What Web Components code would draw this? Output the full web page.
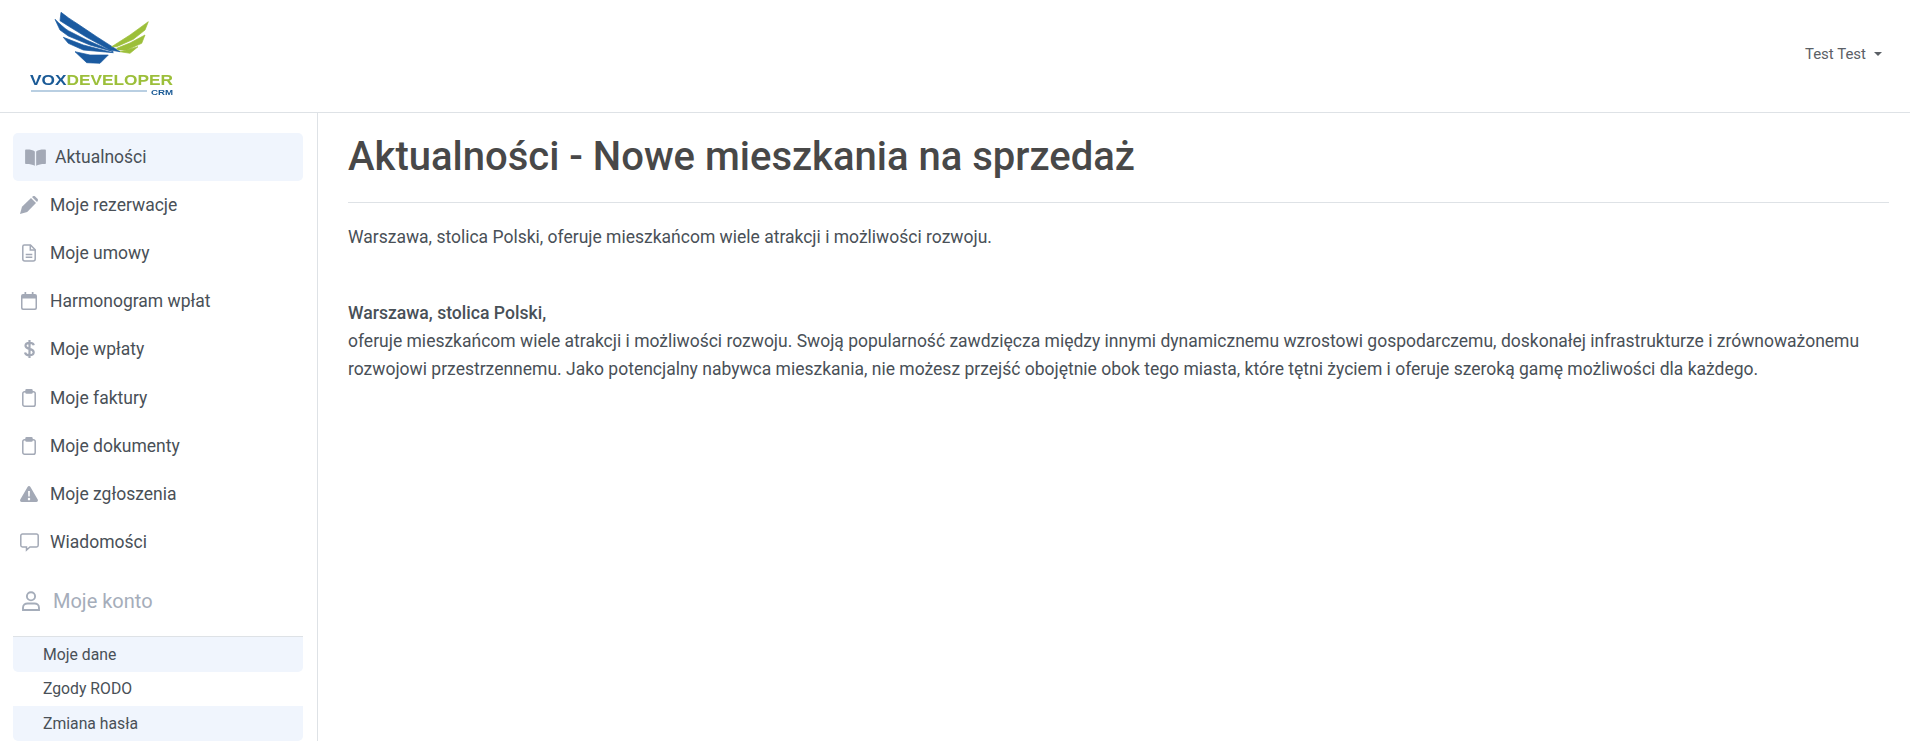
<!DOCTYPE html>
<html lang="pl">
<head>
<meta charset="utf-8">
<title>Aktualności</title>
<style>
    html, body {
        margin: 0;
        background: #fff;
        color: #495057;
        font-family: Roboto, "Liberation Sans", sans-serif;
    }
</style>
</head>
<body>
<crm-app></crm-app>
<script>
const icons = {
    book: `<svg viewBox="0 0 22 18" width="21" height="17"><path d="M10.300 2.600C8.200 1 4.600.4.800.6.300.7 0 1 0 1.500V15.200c0 .5.300.8.800.8 3.500-.1 7 .4 9.500 1.800z"/><path d="M11.700 2.600C13.800 1 17.400.4 21.200.6c.5.100.8.400.8.900V15.200c0 .5-.3.800-.8.800-3.500-.1-7 .4-9.500 1.800z"/></svg>`,
    pencil: `<svg viewBox="0 0 18 18" width="18" height="18"><path d="M0 18l2-7.200L11 2l5 5-8.800 9z"/><path d="M12 1l1-.7c.6-.4 1.300-.4 1.900 0l2.800 2.700c.4.600.4 1.300 0 1.900L17 6z"/></svg>`,
    file: `<svg viewBox="0 0 14 18" width="14" height="18" fill="none"><path d="M2.300 1h6.200l4.700 4.700V15a2 2 0 0 1-2 2H2.800a2 2 0 0 1-2-2V2.500A1.500 1.500 0 0 1 2.300 1z"/><path d="M8.300 1v5h4.900M3.700 10.500h6.600M3.700 13.300h6.600"/></svg>`,
    calendar: `<svg viewBox="0 0 16 18" width="16" height="18"><path fill-rule="evenodd" d="M3.500 0h1.700v2h5.600V0h1.700v2H14a2 2 0 0 1 2 2v12a2 2 0 0 1-2 2H2a2 2 0 0 1-2-2V4a2 2 0 0 1 2-2h1.500zM1.500 6.500V15.600c0 .5.400.9.900.9h11.200c.5 0 .9-.4.900-.9V6.500z"/></svg>`,
    dollar: `<svg viewBox="0 0 11 18" width="11" height="18" fill="none" class="thick"><path d="M9.800 5.200C9.400 3.600 7.700 2.900 5.600 2.900 3.300 2.900 1.500 3.900 1.500 5.800c0 1.800 1.700 2.500 4 3.100 2.400.6 4.200 1.300 4.200 3.300 0 1.900-1.900 3-4.200 3-2.300 0-4.100-.9-4.500-2.800M5.500 0v18"/></svg>`,
    clipboard: `<svg viewBox="0 0 14 18" width="14" height="18" fill="none"><path d="M4 2.700H2.600A1.800 1.800 0 0 0 .8 4.500V15.400a1.800 1.800 0 0 0 1.800 1.800h8.800a1.800 1.800 0 0 0 1.800-1.800V4.500a1.800 1.800 0 0 0-1.800-1.800H10"/><rect x="4" y=".8" width="6" height="3.200" rx=".6" class="solid"/></svg>`,
    warning: `<svg viewBox="0 0 20 17" width="18" height="16" preserveAspectRatio="none"><path fill-rule="evenodd" d="M8.400 1c.7-1.300 2.500-1.300 3.200 0l8.100 13.400c.7 1.200-.2 2.600-1.600 2.600H1.900C.5 17-.4 15.600.3 14.400zM9 5.200l.2 6h1.600l.2-6zM10 12.500a1.400 1.400 0 1 0 0 2.800 1.400 1.400 0 0 0 0-2.800z"/></svg>`,
    chat: `<svg viewBox="0 0 19 18" width="19" height="18" fill="none"><path d="M2.500 1h14a1.700 1.700 0 0 1 1.700 1.700v9.600a1.700 1.700 0 0 1-1.700 1.700H10l-3.500 3v-3h-4a1.700 1.700 0 0 1-1.700-1.700V2.700A1.700 1.700 0 0 1 2.500 1z"/></svg>`,
    person: `<svg viewBox="0 0 18 20" width="18" height="20" fill="none"><circle cx="9" cy="5.300" r="4.100"/><path d="M1 19v-2.300C1 14 3.200 12.500 5.500 12.500h7c2.300 0 4.500 1.500 4.500 4.200V19z"/></svg>`
}

class VoxLogo extends HTMLElement {
    constructor() {
        super()
        const shadowRoot = this.attachShadow({mode: 'open'})
        shadowRoot.innerHTML = `
            <style>
                :host {
                    display: block;
                    width: 150px;
                    height: 100px;
                }
                svg {
                    display: block;
                    filter: blur(.4px);
                }
                text {
                    font-family: "Liberation Sans", sans-serif;
                    font-weight: 700;
                }
                .wing {
                    stroke-width: .7;
                    stroke-linejoin: round;
                }
            </style>
            <svg viewBox="0 0 150 100" width="150" height="100">
                <g class="wing" fill="#1a5aa0" stroke="#1a5aa0">
                    <path d="M31 12.300C36 16 41 20 46.700 23.300L66.700 36.700 90 51.700 80 50 56.700 37.300 38.300 26 30 20.700z"/>
                    <path d="M25 19.300C30 24 34 28 38.300 30.700L56.700 40 83.300 51.700 60 45 38.300 36 30 30z"/>
                    <path d="M33.300 37.300L53.300 45 83.300 52.700 53.300 50 38.300 43.300z"/>
                    <path d="M45 51.700L60 55 78.300 55 70 63.300 56.700 62.700z"/>
                </g>
                <g class="wing" fill="#9cbf3a" stroke="#9cbf3a">
                    <path d="M81.700 46.700L100 35 118.300 21.700 115 30 103.300 39.300 86.700 46.700z"/>
                    <path d="M115 35L100 43 86.700 48.300 88 50 96.700 50 111.700 43.300z"/>
                    <path d="M108 46.700L90 51.700 100 53.300z"/>
                </g>
                <text x="0" y="85" font-size="15" textLength="143" lengthAdjust="spacingAndGlyphs"><tspan fill="#1a5a96">VOX</tspan><tspan fill="#9cbf3a">DEVELOPER</tspan></text>
                <rect x="1" y="90" width="116" height="2" fill="#b9cfe2"/>
                <text x="121" y="95" font-size="8" fill="#1a5a96" textLength="22" lengthAdjust="spacingAndGlyphs">CRM</text>
            </svg>
        `
    }
}

class AppHeader extends HTMLElement {
    constructor() {
        super()
        const shadowRoot = this.attachShadow({mode: 'open'})
        shadowRoot.innerHTML = `
            <style>
                :host {
                    display: flex;
                    align-items: flex-start;
                    justify-content: space-between;
                    height: 112px;
                    padding-left: 30px;
                    padding-right: 28px;
                    border-bottom: 1px solid #dee2e6;
                }
                .user {
                    display: flex;
                    align-items: center;
                    gap: 8px;
                    margin-top: 45px;
                    font-size: 15px;
                    line-height: 18px;
                    color: #5b6066;
                }
                .caret {
                    width: 0;
                    height: 0;
                    border-left: 4px solid transparent;
                    border-right: 4px solid transparent;
                    border-top: 4px solid #5b6066;
                }
            </style>
            <vox-logo></vox-logo>
            <div class="user"><span>Test Test</span><span class="caret"></span></div>
        `
    }
}

class NavItem extends HTMLElement {
    constructor() {
        super()
        const shadowRoot = this.attachShadow({mode: 'open'})
        const icon = this.getAttribute('icon')
        shadowRoot.innerHTML = `
            <style>
                :host {
                    display: flex;
                    align-items: center;
                    height: 48.1px;
                    font-size: 17.5px;
                    color: #495057;
                    border-radius: 5px;
                    padding-left: 7px;
                }
                :host([active]) {
                    background: #f0f5fd;
                    padding-left: 11px;
                }
                .ico {
                    display: flex;
                    align-items: center;
                    justify-content: center;
                    width: 18px;
                    margin-right: 12px;
                }
                :host([active]) .ico {
                    width: 22px;
                    margin-right: 9px;
                }
                svg {
                    fill: #a3a9b6;
                    overflow: visible;
                }
                svg[fill="none"] {
                    fill: none;
                    stroke: #a3a9b6;
                    stroke-width: 1.5;
                }
                svg.thick {
                    stroke-width: 2.2;
                }
                .solid {
                    fill: #a3a9b6;
                }
            </style>
            <span class="ico">${icons[icon]}</span>
            <slot></slot>
        `
    }
}

class SubItem extends HTMLElement {
    constructor() {
        super()
        const shadowRoot = this.attachShadow({mode: 'open'})
        shadowRoot.innerHTML = `
            <style>
                :host {
                    display: flex;
                    align-items: center;
                    height: 34.7px;
                    padding-left: 30px;
                    font-size: 15.75px;
                    color: #495057;
                    border-radius: 0 0 5px 5px;
                }
                :host([shaded]) {
                    background: #f0f5fd;
                }
            </style>
            <slot></slot>
        `
    }
}

class SideNav extends HTMLElement {
    constructor() {
        super()
        const shadowRoot = this.attachShadow({mode: 'open'})
        shadowRoot.innerHTML = `
            <style>
                :host {
                    display: block;
                    box-sizing: border-box;
                    flex: none;
                    width: 318px;
                    height: 628px;
                    padding: 20px 14px 0 13px;
                    border-right: 1px solid #dee2e6;
                }
                .account {
                    display: flex;
                    align-items: center;
                    gap: 13px;
                    height: 71px;
                    box-sizing: border-box;
                    padding-left: 9px;
                    font-size: 20px;
                    color: #a5adba;
                    border-bottom: 1px solid #dee2e6;
                }
                .account svg {
                    fill: none;
                    stroke: #a5adba;
                    stroke-width: 1.9;
                }
            </style>
            <nav-item icon="book" active>Aktualności</nav-item>
            <nav-item icon="pencil">Moje rezerwacje</nav-item>
            <nav-item icon="file">Moje umowy</nav-item>
            <nav-item icon="calendar">Harmonogram wpłat</nav-item>
            <nav-item icon="dollar">Moje wpłaty</nav-item>
            <nav-item icon="clipboard">Moje faktury</nav-item>
            <nav-item icon="clipboard">Moje dokumenty</nav-item>
            <nav-item icon="warning">Moje zgłoszenia</nav-item>
            <nav-item icon="chat">Wiadomości</nav-item>
            <div class="account">${icons.person}<span>Moje konto</span></div>
            <sub-item shaded>Moje dane</sub-item>
            <sub-item>Zgody RODO</sub-item>
            <sub-item shaded>Zmiana hasła</sub-item>
        `
    }
}

class NewsPage extends HTMLElement {
    constructor() {
        super()
        const shadowRoot = this.attachShadow({mode: 'open'})
        shadowRoot.innerHTML = `
            <style>
                :host {
                    display: block;
                    flex: 1;
                    padding: 20px 21px 0 30px;
                    font-size: 17.5px;
                    line-height: 28px;
                    color: #495057;
                }
                h1 {
                    margin: 0;
                    padding-bottom: 21px;
                    border-bottom: 1px solid #dee2e6;
                    font-size: 40px;
                    line-height: 48px;
                    font-weight: 500;
                    color: #484848;
                }
                p {
                    margin: 20px 0 0;
                }
                p + p {
                    margin-top: 48px;
                }
                b {
                    font-size: 17.6px;
                    font-weight: 500;
                }
            </style>
            <h1>Aktualności - Nowe mieszkania na sprzedaż</h1>
            <p>Warszawa, stolica Polski, oferuje mieszkańcom wiele atrakcji i możliwości rozwoju.</p>
            <p><b>Warszawa, stolica Polski,</b><br>oferuje mieszkańcom wiele atrakcji i możliwości rozwoju. Swoją popularność zawdzięcza między innymi dynamicznemu wzrostowi gospodarczemu, doskonałej infrastrukturze i zrównoważonemu rozwojowi przestrzennemu. Jako potencjalny nabywca mieszkania, nie możesz przejść obojętnie obok tego miasta, które tętni życiem i oferuje szeroką gamę możliwości dla każdego.</p>
        `
    }
}

class CrmApp extends HTMLElement {
    constructor() {
        super()
        const shadowRoot = this.attachShadow({mode: 'open'})
        shadowRoot.innerHTML = `
            <style>
                :host {
                    display: block;
                }
                .body {
                    display: flex;
                }
            </style>
            <app-header></app-header>
            <div class="body">
                <side-nav></side-nav>
                <news-page></news-page>
            </div>
        `
    }
}

customElements.define('vox-logo', VoxLogo)
customElements.define('app-header', AppHeader)
customElements.define('nav-item', NavItem)
customElements.define('sub-item', SubItem)
customElements.define('side-nav', SideNav)
customElements.define('news-page', NewsPage)
customElements.define('crm-app', CrmApp)
</script>
</body>
</html>
